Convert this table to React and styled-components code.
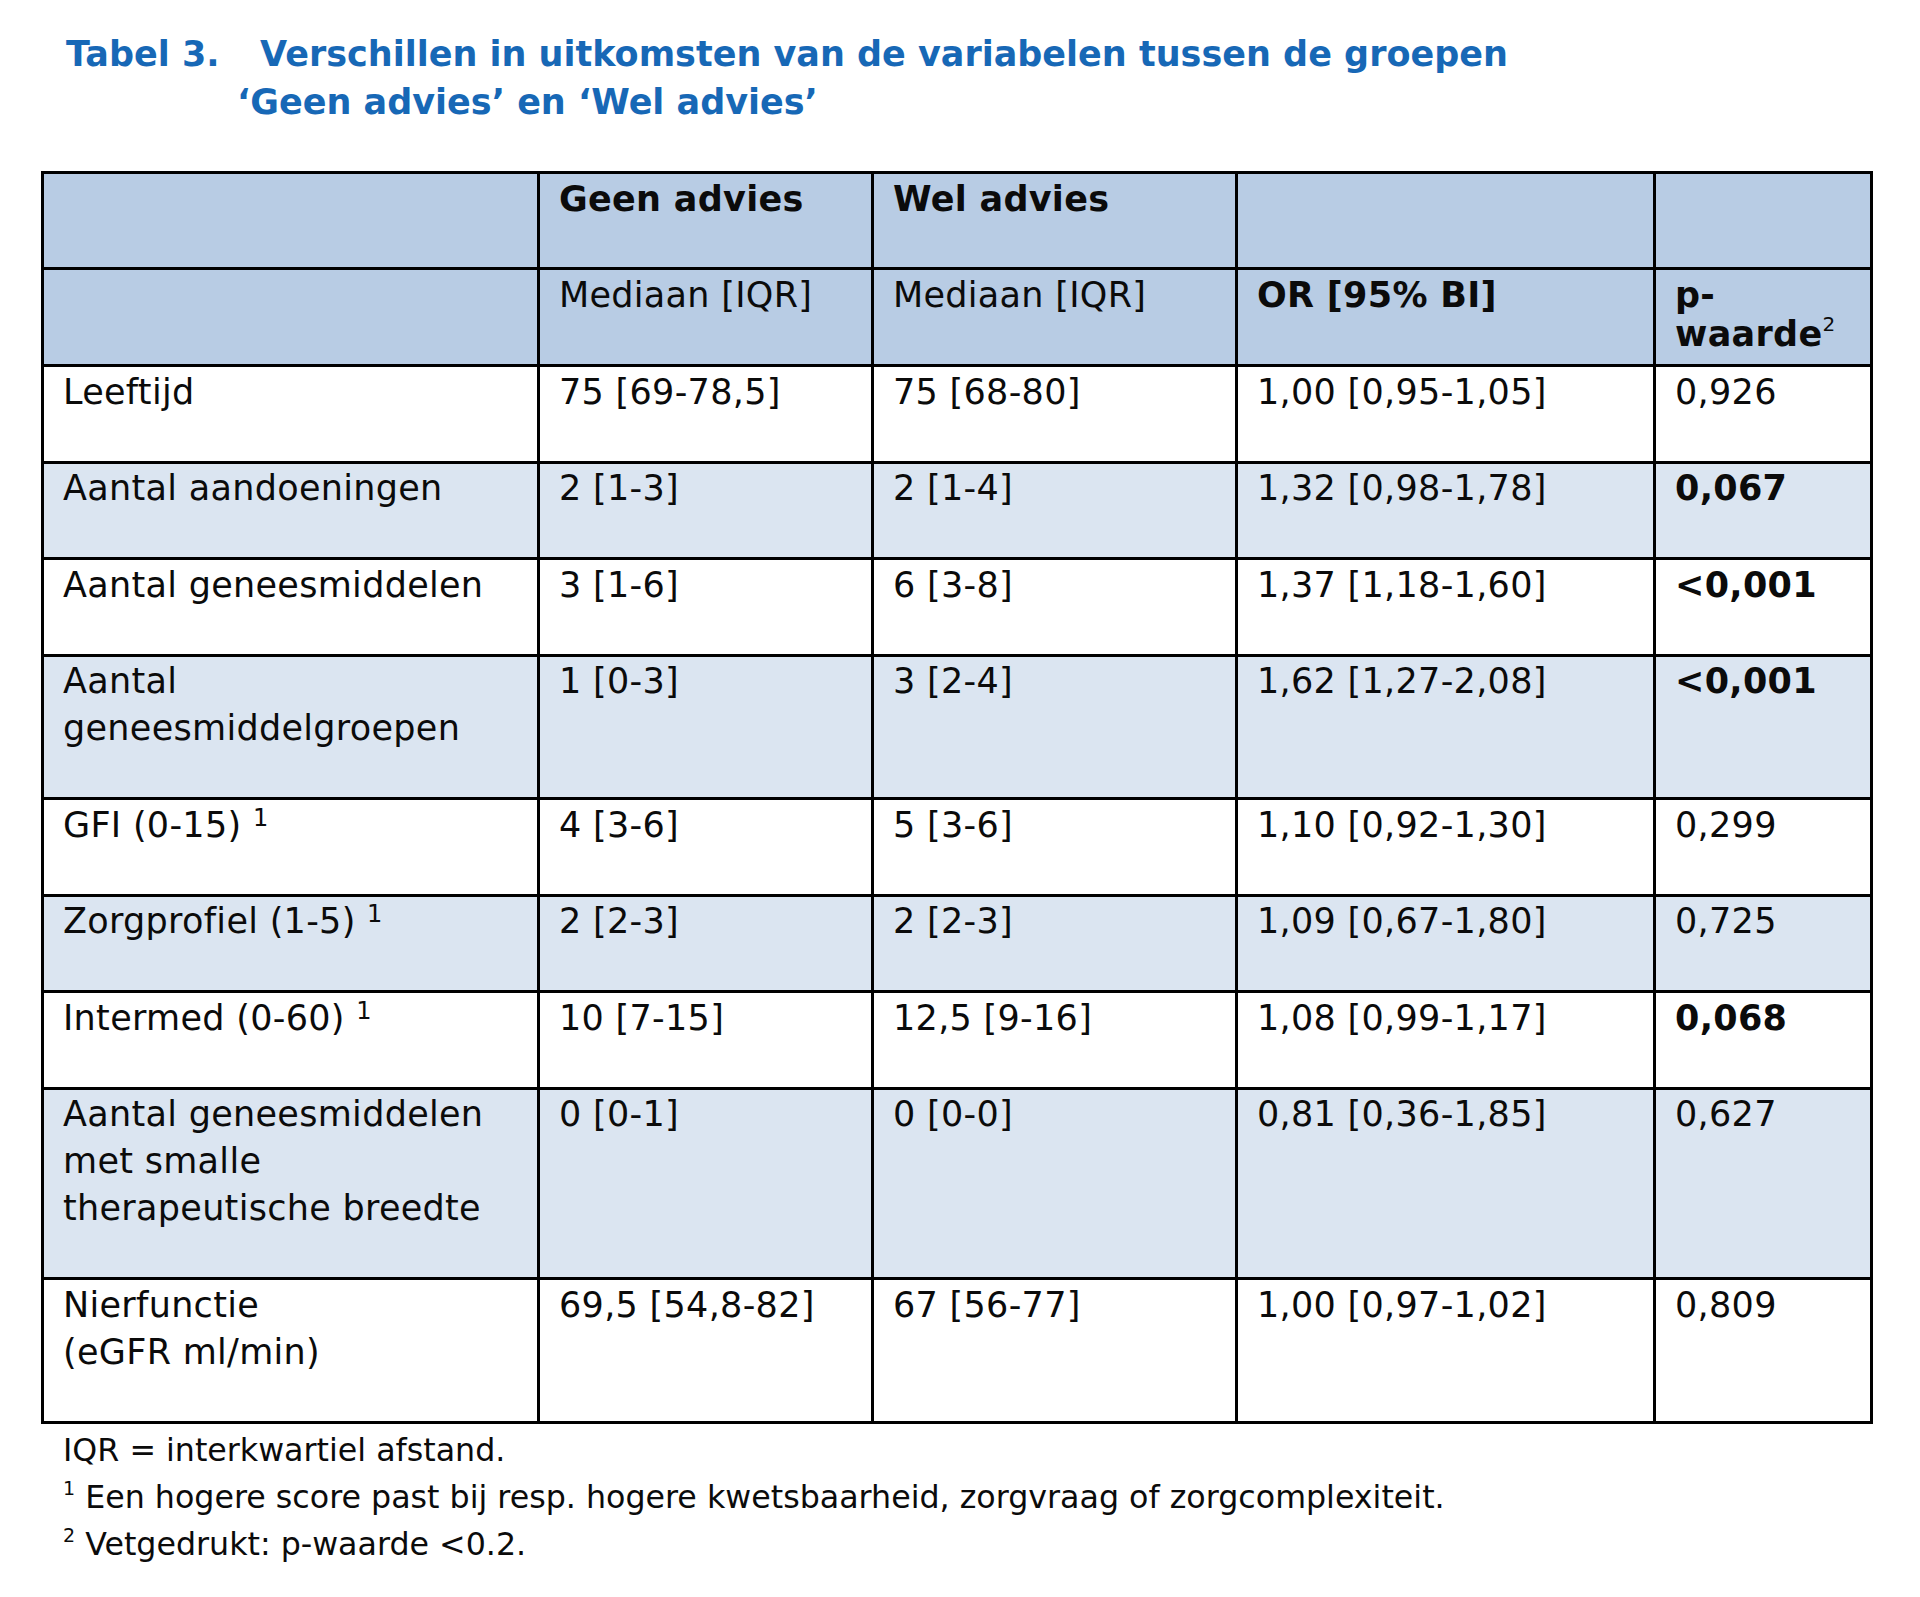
import React from "react";
import styled, { createGlobalStyle } from "styled-components";

const rows = [
  { label: ["Leeftijd"], geen: "75 [69-78,5]", wel: "75 [68-80]", or: "1,00 [0,95-1,05]", p: "0,926" },
  { label: ["Aantal aandoeningen"], geen: "2 [1-3]", wel: "2 [1-4]", or: "1,32 [0,98-1,78]", p: "0,067", sig: true },
  { label: ["Aantal geneesmiddelen"], geen: "3 [1-6]", wel: "6 [3-8]", or: "1,37 [1,18-1,60]", p: "<0,001", sig: true },
  { label: ["Aantal", "geneesmiddelgroepen"], geen: "1 [0-3]", wel: "3 [2-4]", or: "1,62 [1,27-2,08]", p: "<0,001", sig: true },
  { label: ["GFI (0-15) "], note: "1", geen: "4 [3-6]", wel: "5 [3-6]", or: "1,10 [0,92-1,30]", p: "0,299" },
  { label: ["Zorgprofiel (1-5) "], note: "1", geen: "2 [2-3]", wel: "2 [2-3]", or: "1,09 [0,67-1,80]", p: "0,725" },
  { label: ["Intermed (0-60) "], note: "1", geen: "10 [7-15]", wel: "12,5 [9-16]", or: "1,08 [0,99-1,17]", p: "0,068", sig: true },
  {
    label: ["Aantal geneesmiddelen", "met smalle", "therapeutische breedte"],
    geen: "0 [0-1]",
    wel: "0 [0-0]",
    or: "0,81 [0,36-1,85]",
    p: "0,627",
  },
  { label: ["Nierfunctie", "(eGFR ml/min)"], geen: "69,5 [54,8-82]", wel: "67 [56-77]", or: "1,00 [0,97-1,02]", p: "0,809" },
];

const columns = [496, 334, 364, 418, 214];

const App = () => {
  return (
    <Page>
      <GlobalStyle />
      <Caption>
        <CaptionLine>
          <CaptionNo>Tabel 3.</CaptionNo>
          Verschillen in uitkomsten van de variabelen tussen de groepen
        </CaptionLine>
        <CaptionLine $indent>‘Geen advies’ en ‘Wel advies’</CaptionLine>
      </Caption>

      <Table>
        <colgroup>
          {columns.map((w, i) => (
            <Col key={i} $w={w} />
          ))}
        </colgroup>
        <thead>
          <HeadRow $h={96}>
            <HeadCell />
            <HeadCell $bold>Geen advies</HeadCell>
            <HeadCell $bold>Wel advies</HeadCell>
            <HeadCell />
            <HeadCell />
          </HeadRow>
          <HeadRow $h={97}>
            <HeadCell />
            <HeadCell>Mediaan [IQR]</HeadCell>
            <HeadCell>Mediaan [IQR]</HeadCell>
            <HeadCell $bold>OR [95% BI]</HeadCell>
            <HeadCell $bold>
              p-
              <br />
              waarde<Note $small>2</Note>
            </HeadCell>
          </HeadRow>
        </thead>
        <tbody>
          {rows.map((row, i) => (
            <Row key={i} $shade={i % 2 === 1}>
              <Cell>
                {row.label.map((line, j) => (
                  <React.Fragment key={j}>
                    {j > 0 && <br />}
                    {line}
                  </React.Fragment>
                ))}
                {row.note && <Note>{row.note}</Note>}
              </Cell>
              <Cell>{row.geen}</Cell>
              <Cell>{row.wel}</Cell>
              <Cell>{row.or}</Cell>
              <Cell $bold={row.sig}>{row.p}</Cell>
            </Row>
          ))}
        </tbody>
      </Table>

      <Footnotes>
        <FootLine>IQR = interkwartiel afstand.</FootLine>
        <FootLine>
          <FootMark>1</FootMark> Een hogere score past bij resp. hogere kwetsbaarheid, zorgvraag of
          zorgcomplexiteit.
        </FootLine>
        <FootLine>
          <FootMark>2</FootMark> Vetgedrukt: p-waarde &lt;0.2.
        </FootLine>
      </Footnotes>
    </Page>
  );
};

export default App;

const GlobalStyle = createGlobalStyle`
  body {
    margin: 0;
    background: #ffffff;
  }
`;

const Page = styled.div`
  padding: 30px 0 40px 41px;
  font-family: "DejaVu Sans", Verdana, sans-serif;
  color: #0b0b0b;
`;

const Caption = styled.div`
  padding-left: 25px;
  margin-bottom: 45px;
  color: #1768b6;
  font-size: 35px;
  font-weight: 700;
  line-height: 48px;
`;

const CaptionLine = styled.div`
  padding-left: ${(props) => (props.$indent ? "171px" : "0")};
  white-space: nowrap;
`;

const CaptionNo = styled.span`
  display: inline-block;
  width: 194px;
`;

const Table = styled.table`
  width: 1832px;
  table-layout: fixed;
  border-collapse: separate;
  border-spacing: 0;
  border: 3px solid #000;
  font-size: 35px;
  letter-spacing: 0.3px;
`;

const Col = styled.col`
  width: ${(props) => props.$w}px;
`;

const HeadRow = styled.tr`
  height: ${(props) => props.$h}px;
`;

const HeadCell = styled.th`
  padding: 6px 19px 0;
  text-align: left;
  vertical-align: top;
  line-height: 39px;
  font-weight: ${(props) => (props.$bold ? 700 : 400)};
  background: #b8cce4;
  border-right: 3px solid #000;
  border-bottom: 3px solid #000;

  &:last-child {
    border-right: 0;
  }
`;

const Row = styled.tr`
  background: ${(props) => (props.$shade ? "#dbe5f1" : "#ffffff")};

  &:last-child td {
    border-bottom: 0;
  }
`;

const Cell = styled.td`
  padding: 1.5px 19px 45px;
  vertical-align: top;
  line-height: 47px;
  font-weight: ${(props) => (props.$bold ? 700 : 400)};
  border-right: 3px solid #000;
  border-bottom: 3px solid #000;

  &:last-child {
    border-right: 0;
  }
`;

const Note = styled.sup`
  font-size: ${(props) => (props.$small ? "20px" : "24px")};
  font-weight: 400;
  line-height: 0;
  vertical-align: ${(props) => (props.$small ? "15px" : "11px")};
  letter-spacing: 0;
`;

const Footnotes = styled.div`
  padding: 3px 0 0 22px;
  font-size: 31.7px;
  line-height: 47px;
`;

const FootLine = styled.p`
  margin: 0;
`;

const FootMark = styled.sup`
  font-size: 19px;
  line-height: 0;
  vertical-align: 13px;
`;
